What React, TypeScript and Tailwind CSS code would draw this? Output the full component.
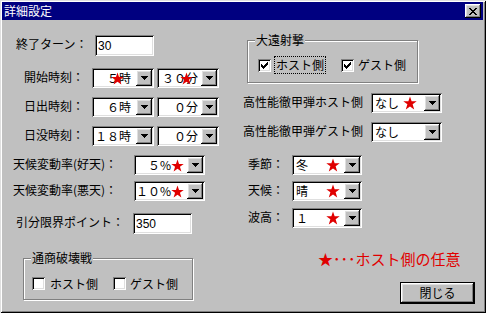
import React from "react";

const raised =
  "shadow-[inset_-1px_-1px_#000,inset_1px_1px_#fff,inset_-2px_-2px_#808080,inset_2px_2px_#dfdfdf]";
const sunken =
  "shadow-[inset_1px_1px_#808080,inset_-1px_-1px_#fff,inset_2px_2px_#000,inset_-2px_-2px_#dfdfdf]";

function Pixels({ rows, size, color = "#000" }: { rows: string[]; size: [number, number]; color?: string }) {
  const rects: React.ReactNode[] = [];
  rows.forEach((r, y) =>
    r.split("").forEach((c, x) => {
      if (c === "x") rects.push(<rect key={`${x}-${y}`} x={x} y={y} width={1} height={1} fill={color} />);
    })
  );
  return (
    <svg width={size[0]} height={size[1]} viewBox={`0 0 ${size[0]} ${size[1]}`} shapeRendering="crispEdges">
      {rects}
    </svg>
  );
}

function Star({ className }: { className: string }) {
  return (
    <svg viewBox="0 0 24 24" className={`absolute ${className}`}>
      <polygon
        points="12,1 14.8,9 23.5,9 16.5,14.3 19.2,23 12,17.8 4.8,23 7.5,14.3 0.5,9 9.2,9"
        fill="#e00000"
      />
    </svg>
  );
}

function Arrow() {
  return (
    <div className={`w-[16px] h-[16px] bg-[#c0c0c0] ${raised} flex items-center justify-center shrink-0`}>
      <Pixels rows={["xxxxxxx", ".xxxxx.", "..xxx..", "...x..."]} size={[7, 4]} />
    </div>
  );
}

function Combo({
  className,
  text,
  right,
  pr = "",
  star,
}: {
  className: string;
  text: string;
  right?: boolean;
  pr?: string;
  star?: string;
}) {
  return (
    <div className={`relative flex h-[20px] bg-white p-[2px] shrink-0 ${sunken} ${className}`}>
      <div
        className={`flex-1 flex items-center text-[12px] leading-[12px] whitespace-nowrap overflow-hidden ${
          right ? "justify-end" : "justify-start pl-[2px]"
        } ${pr}`}
      >
        {text}
      </div>
      <Arrow />
      {star && <Star className={star} />}
    </div>
  );
}

function TextBox({ className, text }: { className: string; text: string }) {
  return (
    <div
      className={`h-[21px] bg-white p-[2px] flex items-center shrink-0 ${sunken} ${className} font-['Liberation_Sans_Narrow','Liberation_Sans',sans-serif] text-[12px] leading-[12px] pl-[3px]`}
    >
      {text}
    </div>
  );
}

function Check({ checked }: { checked?: boolean }) {
  return (
    <div className={`w-[13px] h-[13px] bg-white shrink-0 flex items-center justify-center ${sunken}`}>
      {checked && (
        <Pixels
          rows={["......x", ".....xx", "x...xxx", "xx.xxx.", "xxxxx..", ".xxx...", "..x...."]}
          size={[7, 7]}
        />
      )}
    </div>
  );
}

function Label({ className, children }: { className: string; children: React.ReactNode }) {
  return (
    <div className={`shrink-0 whitespace-nowrap text-[12px] leading-[12px] pt-[3px] ${className}`}>{children}</div>
  );
}

function Group({ className, legend, children }: { className: string; legend: string; children: React.ReactNode }) {
  return (
    <div
      className={`relative border border-[#808080] shadow-[1px_1px_#fff,inset_1px_1px_#fff] shrink-0 ${className}`}
    >
      <div className="absolute -top-[7px] left-[7px] bg-[#c0c0c0] px-[1px] text-[12px] leading-[12px] whitespace-nowrap">
        {legend}
      </div>
      {children}
    </div>
  );
}

export default function App() {
  return (
    <div
      className={`relative w-[486px] h-[313px] bg-[#c0c0c0] overflow-hidden text-black font-['Noto_Sans_CJK_JP',sans-serif] shadow-[inset_1px_1px_#dfdfdf,inset_-1px_-1px_#000,inset_2px_2px_#fff,inset_-2px_-2px_#808080]`}
    >
      {/* title bar */}
      <div className="mt-[2px] ml-[2px] mr-[3px] h-[18px] bg-[#000080] flex items-center justify-between">
        <div className="pl-[2px] text-white text-[12px] leading-[12px] whitespace-nowrap">詳細設定</div>
        <div className={`mr-[2px] w-[16px] h-[14px] bg-[#c0c0c0] ${raised} flex items-center justify-center`}>
          <Pixels
            rows={["xx....xx", ".xx..xx.", "..xxxx..", "...xx...", "..xxxx..", ".xx..xx.", "xx....xx"]}
            size={[8, 7]}
          />
        </div>
      </div>

      <div className="flex">
        {/* left column */}
        <div className="w-[240px] flex flex-col shrink-0">
          <div className="flex mt-[15px] pl-[16px]">
            <Label className="w-[79px]">終了ターン：</Label>
            <TextBox className="w-[59px]" text="30" />
          </div>

          <div className="flex mt-[12px] pl-[24px]">
            <Label className="w-[68px]">開始時刻：</Label>
            <Combo className="w-[62px]" text="５時" right pr="pr-[5px]" star="left-[19px] top-[4px] w-[13px] h-[13px]" />
            <Combo
              className="w-[62px] ml-[3px]"
              text="３０分"
              right
              pr="pr-[3px]"
              star="left-[23px] top-[4px] w-[13px] h-[13px]"
            />
          </div>

          <div className="flex mt-[9px] pl-[24px]">
            <Label className="w-[68px]">日出時刻：</Label>
            <Combo className="w-[62px]" text="６時" right pr="pr-[5px]" />
            <Combo className="w-[62px] ml-[3px]" text="０分" right pr="pr-[3px]" />
          </div>

          <div className="flex mt-[9px] pl-[24px]">
            <Label className="w-[68px]">日没時刻：</Label>
            <Combo className="w-[62px]" text="１８時" right pr="pr-[5px]" />
            <Combo className="w-[62px] ml-[3px]" text="０分" right pr="pr-[3px]" />
          </div>

          <div className="flex mt-[9px] pl-[13px]">
            <Label className="w-[121px]">天候変動率(好天)：</Label>
            <Combo
              className="w-[71px]"
              text="５%"
              right
              pr="pr-[16px]"
              star="left-[37px] top-[4px] w-[13px] h-[13px]"
            />
          </div>

          <div className="flex mt-[6px] pl-[13px]">
            <Label className="w-[121px]">天候変動率(悪天)：</Label>
            <Combo
              className="w-[71px]"
              text="１０%"
              right
              pr="pr-[16px]"
              star="left-[37px] top-[4px] w-[13px] h-[13px]"
            />
          </div>

          <div className="flex mt-[12px] pl-[16px]">
            <Label className="w-[117px]">引分限界ポイント：</Label>
            <TextBox className="w-[59px]" text="350" />
          </div>

          <Group className="ml-[23px] mt-[24px] w-[170px] h-[42px]" legend="通商破壊戦">
            <div className="flex items-center pl-[8px] pt-[18px]">
              <Check />
              <div className="ml-[5px] text-[12px] leading-[12px] whitespace-nowrap">ホスト側</div>
              <div className="ml-[15px]">
                <Check />
              </div>
              <div className="ml-[4px] text-[12px] leading-[12px] whitespace-nowrap">ゲスト側</div>
            </div>
          </Group>
        </div>

        {/* right column */}
        <div className="flex-1 flex flex-col">
          <Group className="ml-[7px] mt-[20px] w-[171px] h-[43px]" legend="大遠射撃">
            <div className="flex items-center pl-[10px] pt-[15px]">
              <Check checked />
              <div className="ml-[3px] border border-dotted border-black px-[1px] py-[2px] text-[12px] leading-[12px] whitespace-nowrap">
                ホスト側
              </div>
              <div className="ml-[15px]">
                <Check checked />
              </div>
              <div className="ml-[4px] text-[12px] leading-[12px] whitespace-nowrap">ゲスト側</div>
            </div>
          </Group>

          <div className="flex mt-[10px] pl-[3px]">
            <Label className="w-[128px]">高性能徹甲弾ホスト側</Label>
            <Combo className="w-[71px]" text="なし" star="left-[32px] top-[3px] w-[14px] h-[14px]" />
          </div>

          <div className="flex mt-[9px] pl-[3px]">
            <Label className="w-[128px]">高性能徹甲弾ゲスト側</Label>
            <Combo className="w-[71px]" text="なし" />
          </div>

          <div className="flex mt-[13px] pl-[8px]">
            <Label className="w-[44px]">季節：</Label>
            <Combo className="w-[70px]" text="冬" star="left-[34px] top-[3px] w-[14px] h-[14px]" />
          </div>

          <div className="flex mt-[6px] pl-[8px]">
            <Label className="w-[44px]">天候：</Label>
            <Combo className="w-[70px]" text="晴" star="left-[34px] top-[3px] w-[14px] h-[14px]" />
          </div>

          <div className="flex mt-[7px] pl-[8px]">
            <Label className="w-[44px]">波高：</Label>
            <Combo className="w-[70px]" text="１" star="left-[34px] top-[3px] w-[14px] h-[14px]" />
          </div>

          <div className="ml-[78px] mt-[22px] text-[15px] leading-[17px] text-[#e00000] whitespace-nowrap">
            ★･･･ホスト側の任意
          </div>

          <div className="ml-[160px] mt-[15px] w-[75px] h-[22px] border border-black bg-[#c0c0c0]">
            <div
              className={`w-full h-full flex items-center justify-center text-[12px] leading-[12px] ${raised}`}
            >
              閉じる
            </div>
          </div>
        </div>
      </div>
    </div>
  );
}
